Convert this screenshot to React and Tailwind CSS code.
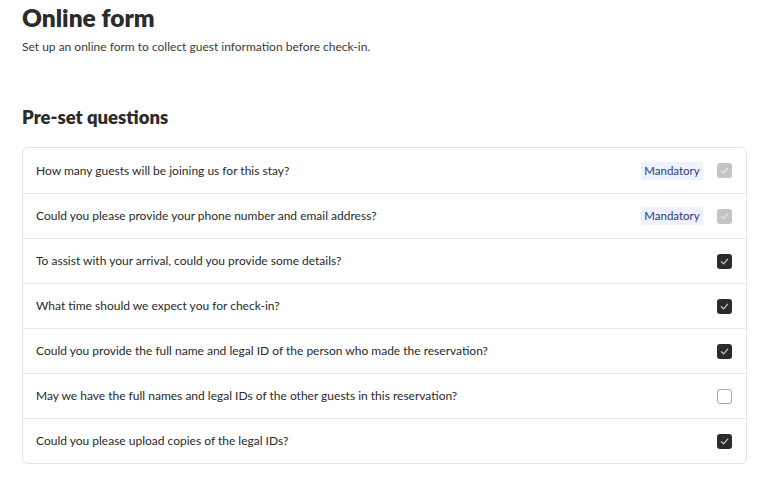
import React from "react";

const rows = [
  { q: "How many guests will be joining us for this stay?", state: "mandatory" },
  { q: "Could you please provide your phone number and email address?", state: "mandatory" },
  { q: "To assist with your arrival, could you provide some details?", state: "checked" },
  { q: "What time should we expect you for check-in?", state: "checked" },
  { q: "Could you provide the full name and legal ID of the person who made the reservation?", state: "checked" },
  { q: "May we have the full names and legal IDs of the other guests in this reservation?", state: "unchecked" },
  { q: "Could you please upload copies of the legal IDs?", state: "checked" },
];

function Check({ color }) {
  return (
    <svg width="9" height="9" viewBox="0 0 10 10" fill="none">
      <path d="M1.5 5.3 L4 7.6 L8.6 2.4" stroke={color} strokeWidth="1.3" strokeLinecap="round" strokeLinejoin="round" />
    </svg>
  );
}

function Box({ state }) {
  if (state === "mandatory") {
    return (
      <div className="w-[15px] h-[15px] rounded-[3px] bg-[#c4c4c4] flex items-center justify-center">
        <Check color="#e6e6e6" />
      </div>
    );
  }
  if (state === "checked") {
    return (
      <div className="w-[15px] h-[15px] rounded-[3px] bg-[#2b2b2b] flex items-center justify-center">
        <Check color="#d0d0d0" />
      </div>
    );
  }
  return <div className="w-[15px] h-[15px] rounded-[3px] border border-[#a8a8a8] bg-white" />;
}

export default function App() {
  return (
    <div className="w-[780px] h-[486px] bg-white overflow-hidden" style={{ fontFamily: "Lato, 'Noto Sans', sans-serif" }}>
      <div className="pl-[22px] pr-[33px]">
        <h1 className="pt-[3px] text-[24.5px] leading-[30px] font-extrabold text-[#2b2b2b]">Online form</h1>
        <p className="mt-[6px] text-[12px] leading-[16px] text-[#3a3a3a]">
          Set up an online form to collect guest information before check-in.
        </p>
        <h2 className="mt-[50px] text-[18.5px] leading-[24px] font-extrabold text-[#2b2b2b]">Pre-set questions</h2>
        <div className="mt-[18px] border border-[#e4e4e4] rounded-[6px]">
          {rows.map((r, i) => (
            <div
              key={i}
              className={`h-[45px] flex items-center justify-between pl-[13px] pr-[14px] ${i > 0 ? "border-t border-[#e8e8e8]" : ""}`}
            >
              <span className="text-[12px] text-[#2a2a2a]">{r.q}</span>
              <div className="flex items-center gap-[14px]">
                {r.state === "mandatory" && (
                  <span className="h-[18px] w-[62px] flex items-center justify-center rounded-[2px] bg-[#edf2fd] text-[11.5px] text-[#2d3b70]">
                    Mandatory
                  </span>
                )}
                <Box state={r.state} />
              </div>
            </div>
          ))}
        </div>
      </div>
    </div>
  );
}
